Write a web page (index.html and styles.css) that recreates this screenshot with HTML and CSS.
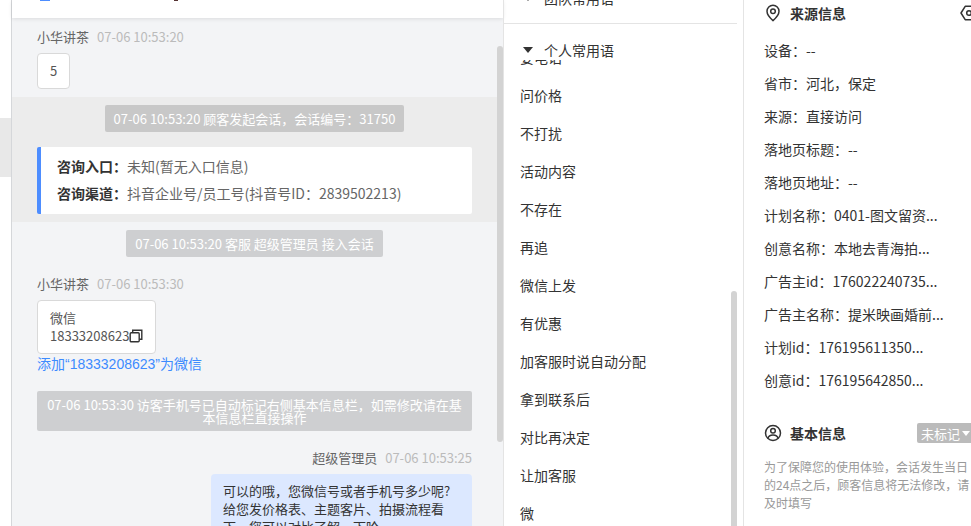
FILE: index.html
```html
<!DOCTYPE html>
<html lang="zh-CN">
<head>
    <meta charset="UTF-8">
    <meta name="viewport" content="width=device-width, initial-scale=1.0">
    <title>客服会话</title>
    <link rel="stylesheet" href="styles.css">
</head>
<body>
    <aside class="sessions">
        <div class="session-active"></div>
    </aside>

    <main class="chat">
        <header class="chat-header">
            <span class="header-mark"></span>
            <span class="header-dot"></span>
        </header>
        <div class="chat-body">
            <div class="messages">
                <div class="meta">
                    <span class="name">小华讲茶</span>
                    <time>07-06 10:53:20</time>
                </div>
                <div class="bubble">5</div>

                <section class="visit">
                    <p class="notice">07-06 10:53:20 顾客发起会话，会话编号：31750</p>
                    <div class="visit-card">
                        <p><b>咨询入口：</b>未知(暂无入口信息)</p>
                        <p><b>咨询渠道：</b>抖音企业号/员工号(抖音号ID：2839502213)</p>
                    </div>
                </section>

                <p class="notice">07-06 10:53:20 客服 超级管理员 接入会话</p>

                <div class="meta meta-next">
                    <span class="name">小华讲茶</span>
                    <time>07-06 10:53:30</time>
                </div>
                <div class="bubble">
                    <div>微信</div>
                    <div class="phone">18333208623<button class="copy" type="button" aria-label="复制"><svg width="14" height="14" viewBox="0 0 14 14" fill="none" stroke="#333" stroke-width="1.4"><rect x="1.2" y="3.7" width="9" height="9" rx="1"/><path d="M3.7 3.5V1.2h9.1v9.1h-2.4"/></svg></button></div>
                </div>
                <a class="add-wechat" href="#">添加“18333208623”为微信</a>

                <p class="notice notice-long">07-06 10:53:30 访客手机号已自动标记右侧基本信息栏，如需修改请在基<br>本信息栏直接操作</p>

                <div class="meta meta-self">
                    <span class="name">超级管理员</span>
                    <time>07-06 10:53:25</time>
                </div>
                <div class="bubble bubble-self">可以的哦，您微信号或者手机号多少呢?<br>给您发价格表、主题客片、拍摄流程看<br>下，您可以对比了解一下哈</div>
            </div>
            <div class="scroll chat-scroll"></div>
        </div>
    </main>

    <section class="phrases">
        <div class="group group-team">
            <svg width="10" height="6" viewBox="0 0 10 6"><path d="M0 0h10L5 6z" fill="#333"/></svg>
            <span>团队常用语</span>
        </div>
        <div class="group group-own">
            <svg width="10" height="6" viewBox="0 0 10 6"><path d="M0 0h10L5 6z" fill="#333"/></svg>
            <span>个人常用语</span>
        </div>
        <div class="phrase-box">
            <ul class="phrase-list">
                <li>要电话</li>
                <li>问价格</li>
                <li>不打扰</li>
                <li>活动内容</li>
                <li>不存在</li>
                <li>再追</li>
                <li>微信上发</li>
                <li>有优惠</li>
                <li>加客服时说自动分配</li>
                <li>拿到联系后</li>
                <li>对比再决定</li>
                <li>让加客服</li>
                <li>微</li>
            </ul>
            <div class="scroll phrase-scroll"></div>
        </div>
    </section>

    <aside class="info">
        <div class="info-title">
            <svg width="18" height="18" viewBox="0 0 18 18" fill="none" stroke="#333" stroke-width="1.5"><path d="M9 16.6C5.500 13.600 3 10.600 3 7.300a6 6 0 0 1 12 0c0 3.300-2.500 6.300-6 9.300z"/><circle cx="9" cy="7.200" r="2.300"/></svg>
            <h2>来源信息</h2>
            <button class="setting" type="button" aria-label="设置"><svg width="18" height="18" viewBox="0 0 18 18" fill="none" stroke="#333" stroke-width="1.5"><path d="M5.200 2.300h7.600L17 9l-4.200 6.700H5.200L1 9z" stroke-linejoin="round"/><circle cx="9" cy="9" r="2.300"/></svg></button>
        </div>
        <ul class="source">
            <li>设备：--</li>
            <li>省市：河北，保定</li>
            <li>来源：直接访问</li>
            <li>落地页标题：--</li>
            <li>落地页地址：--</li>
            <li>计划名称：0401-图文留资...</li>
            <li>创意名称：本地去青海拍...</li>
            <li>广告主id：176022240735...</li>
            <li>广告主名称：提米映画婚前...</li>
            <li>计划id：176195611350...</li>
            <li>创意id：176195642850...</li>
        </ul>
        <div class="info-title info-basic">
            <svg width="18" height="18" viewBox="0 0 18 18" fill="none" stroke="#333" stroke-width="1.5"><circle cx="9" cy="9" r="7.500"/><circle cx="9" cy="6.800" r="2.300"/><path d="M4 14.300c.5-2.400 2.300-3.300 5-3.300s4.500.9 5 3.300"/></svg>
            <h2>基本信息</h2>
            <div class="mark">
                <select aria-label="标记">
                    <option>未标记</option>
                </select>
                <svg width="8" height="5" viewBox="0 0 8 5"><path d="M0 0h8L4 5z" fill="#fff"/></svg>
            </div>
        </div>
        <p class="tip">为了保障您的使用体验，会话发生当日的24点之后，顾客信息将无法修改，请及时填写</p>
    </aside>
</body>
</html>
```
FILE: styles.css
```css
* {
    box-sizing: border-box;
}
body {
    display: flex;
    height: 100vh;
    margin: 0;
    overflow: hidden;
    background: #fff;
    color: #333;
    font-family: "Noto Sans CJK SC", sans-serif;
    font-size: 14px;
}
p, h2, ul {
    margin: 0;
    padding: 0;
}
ul {
    list-style: none;
}
button {
    padding: 0;
    border: none;
    background: none;
    cursor: pointer;
}
svg {
    display: block;
    flex-shrink: 0;
}
.scroll {
    width: 6px;
    border-radius: 3px;
    background: #d3d3d3;
}

/* session list */
.sessions {
    flex: 0 0 12px;
    padding-top: 118px;
    border-right: 1px solid #d5d7da;
}
.session-active {
    height: 59px;
    background: #e8e8e8;
}

/* chat */
.chat {
    flex: 1;
    min-width: 0;
    display: flex;
    flex-direction: column;
    background: #f3f4f6;
    font-size: 13px;
}
.chat-header {
    display: flex;
    align-items: flex-start;
    gap: 124px;
    flex: 0 0 18px;
    padding-left: 28px;
    background: #fff;
    box-shadow: 0 1px 4px rgba(0, 0, 0, 0.1);
}
.header-mark {
    width: 10px;
    height: 1px;
    background: #4d8dff;
}
.header-dot {
    width: 4px;
    height: 1px;
    background: #533;
}
.chat-body {
    flex: 1;
    min-height: 0;
    display: flex;
    overflow: hidden;
}
.messages {
    flex: 1;
    min-width: 0;
    display: flex;
    flex-direction: column;
    align-items: flex-start;
    padding: 10px 25px 0;
}
.chat-scroll {
    height: 396px;
    margin-top: 28px;
}
.meta {
    display: flex;
    gap: 8px;
    line-height: 18px;
    color: #666;
}
.meta time {
    color: #bbb;
}
.meta-next {
    margin-top: 18px;
}
.meta-self {
    align-self: flex-end;
    margin-top: 18px;
}
.bubble {
    margin-top: 7px;
    padding: 8px 12px;
    border: 1px solid #d9d9d9;
    border-radius: 4px;
    background: #fff;
    color: #555;
    line-height: 18px;
}
.bubble-self {
    align-self: flex-end;
    width: 60%;
    padding: 8px 0 8px 12px;
    border: none;
    background: #dce8ff;
    color: #333;
    white-space: nowrap;
}
.phone {
    display: flex;
    align-items: center;
}
.visit {
    align-self: stretch;
    display: flex;
    flex-direction: column;
    margin: 8px -25px 0;
    padding: 0 25px 8px;
    background: #ececec;
}
.notice {
    align-self: center;
    margin-top: 8px;
    padding: 7px 9px;
    border-radius: 2px;
    background: rgba(0, 0, 0, 0.15);
    color: #fff;
    line-height: 13px;
    text-align: center;
    white-space: nowrap;
}
.notice-long {
    align-self: stretch;
    margin-top: 17px;
}
.visit-card {
    margin-top: 15px;
    padding: 6px 16px 7px;
    border-left: 4px solid #4d8dff;
    border-radius: 2px;
    background: #fff;
    color: #666;
    font-size: 14px;
    line-height: 27px;
}
.visit-card b {
    color: #333;
}
.add-wechat {
    color: #3d8bff;
    font-family: "Liberation Sans", "Noto Sans CJK SC", sans-serif;
    font-size: 14px;
    line-height: 20px;
    text-decoration: none;
}

/* quick phrases */
.phrases {
    flex: 0 0 240px;
    display: flex;
    flex-direction: column;
    border-left: 1px solid #e4e4e4;
}
.group {
    display: flex;
    align-items: center;
    gap: 11px;
    padding-left: 19px;
    line-height: 20px;
}
.group-team {
    margin: -12px 6px 0 0;
    padding-bottom: 15px;
    border-bottom: 1px solid #e4e4e4;
}
.group-own {
    padding-top: 16px;
}
.phrase-box {
    flex: 1;
    min-height: 0;
    display: flex;
    justify-content: space-between;
    overflow: hidden;
    padding-right: 6px;
}
.phrase-list {
    margin-top: -22px;
    padding-left: 16px;
    line-height: 38px;
}
.phrase-scroll {
    height: 300px;
    margin-top: 231px;
}

/* visitor info */
.info {
    flex: 0 0 228px;
    padding: 3px 0 0 20px;
    border-left: 1px solid #e4e4e4;
}
.info-title {
    display: flex;
    align-items: center;
    gap: 8px;
    height: 20px;
}
.info-title h2 {
    font-size: 14px;
    font-weight: bold;
}
.setting {
    margin: 0 -7px 0 auto;
}
.source {
    margin-top: 11px;
    line-height: 33px;
    white-space: nowrap;
}
.info-basic {
    margin-top: 26px;
}
.mark {
    display: flex;
    align-items: center;
    height: 20px;
    margin-left: auto;
    padding: 0 1px 0 4px;
    border-radius: 2px 0 0 2px;
    background: #bbb;
}
.mark select {
    appearance: none;
    width: 41px;
    padding: 0;
    border: none;
    background: none;
    color: #fff;
    font-family: inherit;
    font-size: 13px;
}
.tip {
    margin-top: 15px;
    color: #999;
    font-size: 12px;
    line-height: 18px;
}
```
